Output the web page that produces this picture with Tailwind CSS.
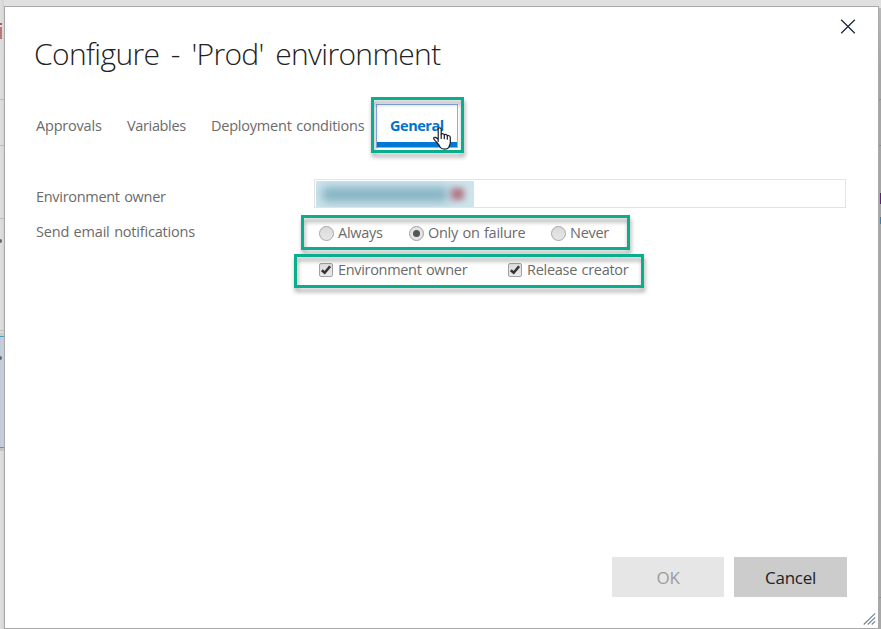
<!DOCTYPE html>
<html lang="en">
<head>
<meta charset="utf-8">
<title>Configure environment</title>
<script src="https://cdn.jsdelivr.net/npm/@tailwindcss/browser@4"></script>
</head>
<body class="relative h-[629px] w-[881px] overflow-hidden bg-[#e0e0e0] font-['Open_Sans','Noto_Sans',sans-serif] text-[14.5px] tracking-[-0.28px] text-[#6b6b6b] [word-spacing:1px]">
  <!-- Page behind the dialog -->
  <div class="absolute inset-y-0 left-0 w-1 overflow-hidden bg-gradient-to-r from-[#e0e0e0] to-[#d4d4d4]">
    <div class="absolute left-0 top-[23px] h-0.5 w-0.5 bg-[#b05a60]"></div>
    <div class="absolute left-0 top-[27px] h-3 w-0.5 bg-[#b8787c]"></div>
    <div class="absolute top-[99px] h-px w-full bg-[#bcbcbc]"></div>
    <div class="absolute top-[145px] h-px w-full bg-[#bcbcbc]"></div>
    <div class="absolute top-[218px] h-px w-full bg-[#bcbcbc]"></div>
    <div class="absolute -left-0.5 top-[239px] h-1 w-1 rounded-full bg-[#666]"></div>
    <div class="absolute top-[330px] h-px w-full bg-[#bcbcbc]"></div>
    <div class="absolute top-[333px] h-[3px] w-full bg-[#cbcbcb]"></div>
    <div class="absolute top-[336px] h-28 w-full border-y border-[#4a9cc8] bg-[#c3ceda]"></div>
    <div class="absolute -left-0.5 top-[356px] h-1 w-1 rounded-full bg-[#666]"></div>
    <div class="absolute top-[448px] h-[3px] w-full bg-[#c4c4c4]"></div>
  </div>
  <div class="absolute bottom-0 right-0 top-2 w-[3px] bg-gradient-to-b from-[#b8b8b8] via-[#a5a5a5] via-10% to-[#a8a8a8]">
    <div class="absolute top-[91px] h-px w-full bg-[#8e8e8e]"></div>
    <div class="absolute top-[137px] h-px w-full bg-[#8e8e8e]"></div>
    <div class="absolute right-0 top-[185px] h-[11px] w-px bg-[#5c2070]"></div>
    <div class="absolute right-0 top-[209px] h-[7px] w-px bg-[#3d7ba0]"></div>
    <div class="absolute top-[589px] h-px w-full bg-[#8e8e8e]"></div>
  </div>

  <main class="absolute left-1 top-1.5 flex h-[623px] w-[875px] flex-col border border-[#a8a8a8] bg-white">
    <header class="flex h-[93px] justify-between pl-[29px] pr-[22px] pt-[12px]">
      <h1 class="mt-[13px] whitespace-nowrap text-[30px] font-light leading-[44px] tracking-[-0.65px] text-[#222] [word-spacing:4.4px]">Configure - 'Prod' environment</h1>
      <svg class="h-[15px] w-[16px]" viewBox="0 0 16 15" fill="none" stroke="#1b2b40" stroke-width="1.3"><path d="M1.2.7 14.8 14.3M14.8.7 1.2 14.3"/></svg>
    </header>

    <nav class="flex h-[52px] whitespace-nowrap pl-[31px] leading-[52px]">
      <a class="w-[91px] tracking-[-0.2px]">Approvals</a>
      <a class="w-[84px] tracking-[-0.35px]">Variables</a>
      <a class="w-[165px] tracking-[-0.22px]">Deployment conditions</a>
      <a class="mt-[4px] h-[44px] w-[82px] border border-[#8ab0ee] font-bold leading-[42px] tracking-[-0.45px] text-[#0073cc]"><span class="block h-[42px] border-b-[5px] border-[#0078d4] pl-[13px]">General</span></a>
    </nav>

    <form class="grid grid-cols-[278px_532px] whitespace-nowrap pl-[31px] pt-[20px]">
      <label class="h-[36px] pt-[7px] leading-[36px] tracking-[-0.3px]">Environment owner</label>
      <div class="mt-[7px] h-[29px] border border-[#e3e3e3] p-px">
        <div class="flex h-[26px] w-[158px] items-center overflow-hidden bg-[#cde4ed] pl-1.5">
          <div class="h-[15px] w-[126px] rounded-sm bg-[#86b3c2] blur-[5px]"></div>
          <div class="ml-[3px] h-[12px] w-[13px] bg-[#b07583] blur-[3px]"></div>
        </div>
      </div>
      <label class="h-[36px] pt-[6px] leading-[36px] tracking-[-0.2px]">Send email notifications</label>
      <div class="flex h-[37px] items-center pl-[5px] pt-[13px]">
        <label class="flex w-[90px] items-center gap-[4px]"><i class="h-[15px] w-[15px] rounded-full border border-[#a6a6a6] bg-gradient-to-b from-[#dadada] to-[#e8e8e8]"></i>Always</label>
        <label class="flex w-[142px] items-center gap-[4px]"><i class="flex h-[15px] w-[15px] items-center justify-center rounded-full border border-[#a0a0a0] bg-[#e4e4e4]"><b class="h-[7px] w-[7px] rounded-full bg-[#555]"></b></i>Only on failure</label>
        <label class="flex items-center gap-[4px]"><i class="h-[15px] w-[15px] rounded-full border border-[#a6a6a6] bg-gradient-to-b from-[#dadada] to-[#e8e8e8]"></i>Never</label>
      </div>
      <div class="col-start-2 flex h-[37px] items-center pl-[5px] pt-[13px]">
        <label class="flex w-[189px] items-center gap-[5px] tracking-[-0.32px]"><i class="h-[14px] w-[14px] rounded-[2px] border border-[#a0a0a0] bg-gradient-to-b from-[#dcdcdc] to-[#eaeaea]"><svg viewBox="0 0 12 12" class="h-3 w-3" fill="none" stroke="#333" stroke-width="2.5"><path d="M1.8 6.2 4.7 8.8 10.1 2.2"/></svg></i>Environment owner</label>
        <label class="flex items-center gap-[5px]"><i class="h-[14px] w-[14px] rounded-[2px] border border-[#a0a0a0] bg-gradient-to-b from-[#dcdcdc] to-[#eaeaea]"><svg viewBox="0 0 12 12" class="h-3 w-3" fill="none" stroke="#333" stroke-width="2.5"><path d="M1.8 6.2 4.7 8.8 10.1 2.2"/></svg></i>Release creator</label>
      </div>
    </form>

    <footer class="mb-[31px] mt-auto flex justify-end gap-[10px] pr-[31px] text-[17px]">
      <button class="h-10 w-[112px] bg-[#e6e6e6] pt-0.5 text-[#9b9b9b]">OK</button>
      <button class="h-10 w-[113px] bg-[#ccc] pt-0.5 text-[#222]">Cancel</button>
    </footer>
    <svg class="absolute bottom-[3px] right-[2px] h-3 w-[13px]" viewBox="0 0 13 12" fill="none" stroke="#6f8290" stroke-width="1.1"><path d="M.7 11.5 12.2.4M4.7 11.5l7.5-7.2M8.7 11.5l3.5-3.4"/></svg>
  </main>

  <!-- Callout frames and pointer -->
  <div class="absolute left-[371px] top-[97px] h-[56px] w-[93px] border-3 border-[#0bae8c] drop-shadow-[1px_4px_2px_rgba(0,0,0,0.35)]"></div>
  <div class="absolute left-[301px] top-[215px] h-[35px] w-[329px] border-3 border-[#0bae8c] drop-shadow-[1px_4px_2px_rgba(0,0,0,0.35)]"></div>
  <div class="absolute left-[294px] top-[254px] h-[34px] w-[350px] border-3 border-[#0bae8c] drop-shadow-[1px_4px_2px_rgba(0,0,0,0.35)]"></div>
  <svg class="absolute left-[433px] top-[127px] h-[23px] w-[19px]" viewBox="0 0 19 23" fill="#fff" stroke="#1c1c2c" stroke-width="1.2" stroke-linejoin="round" stroke-linecap="round"><path d="M5.2 14.4V2.3c0-2 3-2 3 0v5.2c.6-1.2 2.9-1 3.1.5.8-.9 2.8-.7 3 .8 1-.7 3 0 3 1.7v5.3c0 1.8-.5 2.5-1.3 3.7v.8c-2 2.4-7.3 2.4-8.8 0-.6-2-2.6-3.8-4.3-5.9-1.6-1.8-2.6-2.6-2.2-3.5.7-1.3 2.5-.5 4.5 1.5z"/><path d="M8.2 7.5v4M11.3 8v3.7M14.3 8.8v3.4" fill="none"/></svg>
</body>
</html>
